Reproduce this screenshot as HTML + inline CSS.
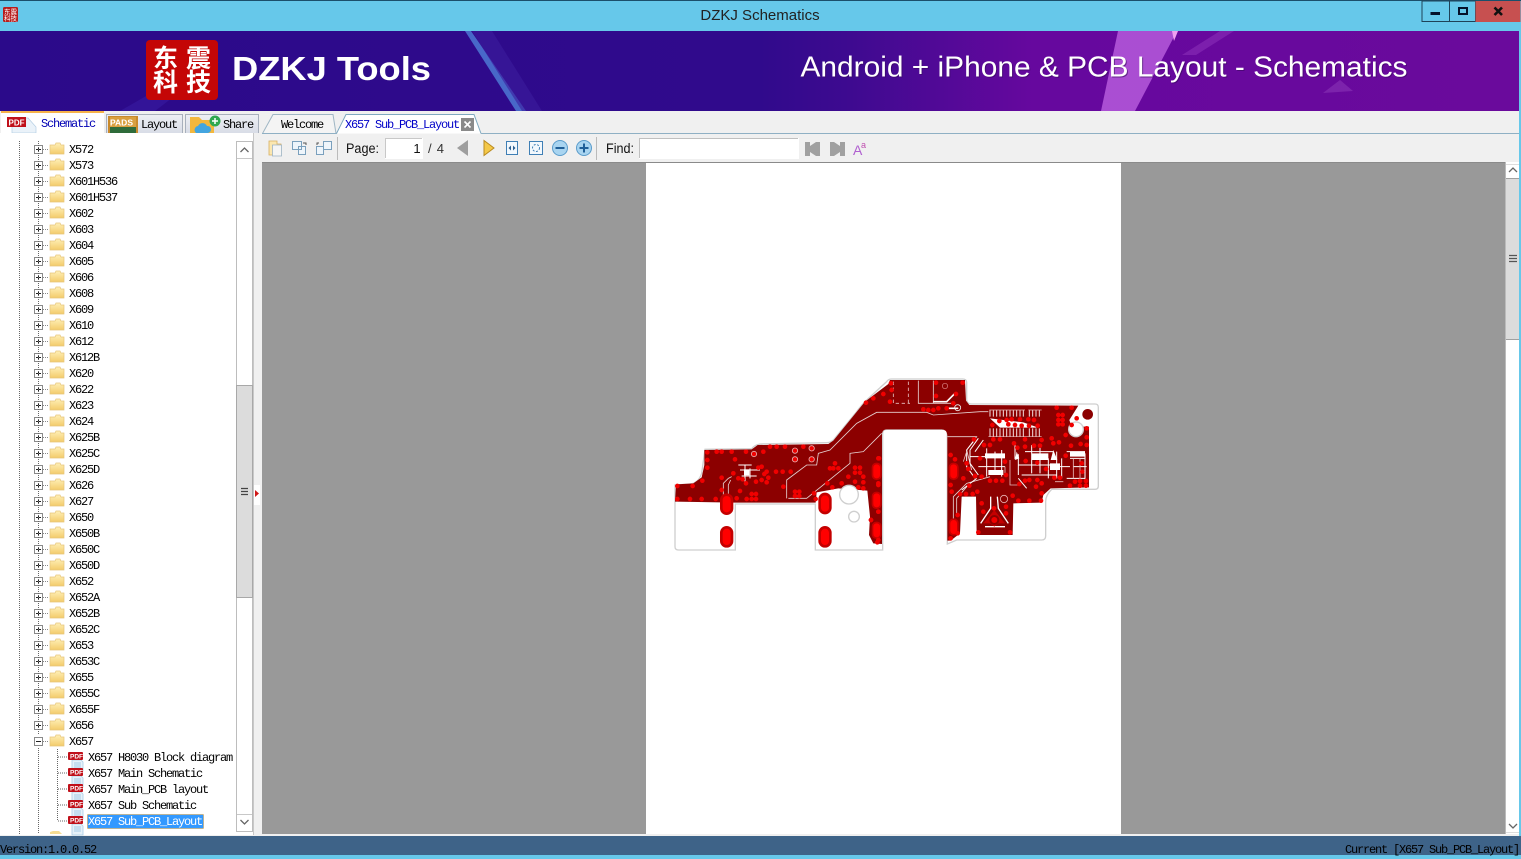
<!DOCTYPE html>
<html><head><meta charset="utf-8"><title>DZKJ Schematics</title>
<style>
html,body{margin:0;padding:0;background:#66c8ea;overflow:hidden}
svg{display:block;position:absolute;left:0;top:0}
.ui{font-family:"Liberation Sans","Noto Sans CJK SC",sans-serif}
.m{font-family:"Liberation Mono","Noto Sans CJK SC",monospace;font-size:12px;letter-spacing:-1.2px;fill:#000}
</style></head><body>
<svg width="1521" height="859" viewBox="0 0 1521 859" xmlns="http://www.w3.org/2000/svg">
<defs>
<linearGradient id="bn" x1="0" x2="1" y1="0" y2="0">
<stop offset="0" stop-color="#2b0a8a"/><stop offset=".5" stop-color="#300a8c"/><stop offset=".56" stop-color="#3e0a90"/><stop offset=".68" stop-color="#66089e"/><stop offset="1" stop-color="#6a0a9c"/>
</linearGradient>
<linearGradient id="fd" x1="0" x2="0" y1="0" y2="1"><stop offset="0" stop-color="#fff0b8"/><stop offset="1" stop-color="#f3cb6a"/></linearGradient>
<linearGradient id="tb" x1="0" x2="0" y1="0" y2="1"><stop offset="0" stop-color="#eef0f5"/><stop offset="1" stop-color="#d8dce6"/></linearGradient>
<pattern id="row" x="0" y="141" width="80" height="16" patternUnits="userSpaceOnUse">
<rect x="34.500" y="4.500" width="8" height="8" fill="#fff" stroke="#8a8a8a"/>
<path d="M36 8.500h5M38.500 6v5" stroke="#222" fill="none"/>
<path d="M43 8.500h6" stroke="#888" stroke-dasharray="1 1" fill="none"/>
<path d="M50 4h5l1-2h4l1 2h3v9H50z" fill="url(#fd)" stroke="#e6c57a" stroke-width=".7"/>
</pattern>
<g id="pdf"><path d="M4 8h9l2 2v9H4z" fill="#e6f1f9" stroke="#a9cde6" stroke-width=".8"/><path d="M6 11h7M6 13h7M6 15h7" stroke="#8fc0e0" stroke-width=".8"/><rect x="0" y="0" width="15" height="8" rx="1" fill="#c0101a"/><text x="2" y="6.500" font-size="6.500" font-weight="700" fill="#fff" class="ui">PDF</text></g>
</defs>

<!-- title bar -->
<rect width="1521" height="859" fill="#66c8ea"/>
<rect width="1521" height="1" fill="#1b4f6b"/>
<rect x="3" y="7" width="15" height="15" rx="1.500" fill="#b71c1c"/>
<text x="10.500" y="14" font-size="6.500" fill="#fff" text-anchor="middle" class="ui">东震</text>
<text x="10.500" y="20.500" font-size="6.500" fill="#fff" text-anchor="middle" class="ui">科技</text>
<text x="760" y="20" font-size="15" fill="#222" text-anchor="middle" class="ui">DZKJ Schematics</text>
<rect x="1422" y="1" width="27.500" height="20.500" fill="#66c8ea" stroke="#1f4258"/>
<rect x="1449.500" y="1" width="26" height="20.500" fill="#66c8ea" stroke="#1f4258"/>
<rect x="1475.500" y="1" width="45" height="21" fill="#c75050"/>
<rect x="1430.500" y="12" width="9.500" height="3" fill="#05122a"/>
<rect x="1459" y="8" width="8" height="6" fill="none" stroke="#05122a" stroke-width="2"/>
<path d="M1494.500 7.500l7.500 7.500M1502 7.500l-7.500 7.500" stroke="#111" stroke-width="2.600" fill="none"/>

<!-- banner -->
<rect x="0" y="31" width="1519" height="80" fill="url(#bn)"/>
<path d="M120 111L205 62h14L155 111zM190 62l16-9h8l-12 9z" fill="#3c22a8" opacity=".45"/>
<path d="M465 31h6l55 80h-10z" fill="#4f7fd8" opacity=".8"/>
<path d="M472 31l20 0 50 80h-20z" fill="#3c1c9e" opacity=".6"/>
<path d="M1118 31h59l-42 80h-34z" fill="#b65bdc" opacity=".85"/>
<path d="M1172 31h6l-4 10z" fill="#f0a0f0"/>
<path d="M1182 55l38-24h14l-38 24z" fill="#8a2eb8" opacity=".6"/>
<path d="M1323 93l17-13 13 11z" fill="#8a35b5" opacity=".6"/>
<rect x="146" y="40" width="72" height="60" rx="4" fill="#c40606"/>
<text x="153" y="67" font-size="25" font-weight="700" fill="#fff" class="ui" textLength="58">东震</text>
<text x="153" y="91" font-size="25" font-weight="700" fill="#fff" class="ui" textLength="58">科技</text>
<text x="232" y="80" font-size="33" font-weight="700" fill="#fff" class="ui" textLength="199" lengthAdjust="spacingAndGlyphs">DZKJ Tools</text>
<text x="801.500" y="77.500" font-size="29" fill="#3a0a60" opacity=".6" class="ui" textLength="607" lengthAdjust="spacingAndGlyphs">Android + iPhone &amp; PCB Layout - Schematics</text>
<text x="800.500" y="76.500" font-size="29" fill="#fff" class="ui" textLength="607" lengthAdjust="spacingAndGlyphs">Android + iPhone &amp; PCB Layout - Schematics</text>
<rect x="1519" y="31" width="2" height="80" fill="#66c8ea"/>

<!-- workspace base -->
<rect x="0" y="111" width="1521" height="725" fill="#f0f0f0"/>
<rect x="1519" y="111" width="2" height="725" fill="#66c8ea"/>

<!-- left tabs -->
<rect x="1" y="111" width="103" height="24" fill="#fff"/>
<rect x="1" y="111" width="103" height="2" fill="#f6b24a"/>
<rect x="106.500" y="114.500" width="76" height="19" fill="url(#tb)" stroke="#a8b0bc"/>
<rect x="185.500" y="114.500" width="73" height="19" fill="url(#tb)" stroke="#a8b0bc"/>
<path d="M12 118h16l8 9v6H12z" fill="#eaf2f9" stroke="#b5cfe4" stroke-width=".7"/>
<rect x="7" y="117" width="19" height="10" fill="#c0101a"/>
<text x="8.500" y="125.500" font-size="8" font-weight="700" fill="#fff" class="ui">PDF</text>
<text x="41" y="127" class="m" style="fill:#0000b4">Schematic</text>
<rect x="108" y="116" width="30" height="17" fill="#c98a2c"/>
<rect x="110" y="117" width="26" height="10" fill="#d9a040"/>
<rect x="110" y="127" width="26" height="6" fill="#2f6b3a"/>
<text x="110" y="125.500" font-size="8.500" font-weight="700" fill="#fff" class="ui">PADS</text>
<text x="141" y="128" class="m">Layout</text>
<path d="M190 117h9l3 3h12v13h-24z" fill="#f3b73d"/>
<path d="M196 133a4 4 0 0 1 2-7 5 5 0 0 1 9 0 3.500 3.500 0 0 1 1 7z" fill="#43a5e0"/>
<circle cx="215" cy="121" r="5.500" fill="#2fa84f"/>
<path d="M212 121h6M215 118v6" stroke="#fff" stroke-width="1.500"/>
<text x="223" y="128" class="m">Share</text>

<!-- right tabs -->
<path d="M262.500 133.500L273 114.500h60l3 19z" fill="#f4f4f4" stroke="#9fb6c4"/>
<path d="M336.500 133.500L346 114.500h128l7 19" fill="#fff" stroke="#7fa9c0"/>
<path d="M262 133.500H337M481 133.500H1519" stroke="#8fb0c4"/>
<text x="281" y="128" class="m">Welcome</text>
<text x="345" y="128" class="m" style="fill:#0000c8">X657 Sub_PCB_Layout</text>
<rect x="461" y="118" width="13" height="13" fill="#8a8a8a"/>
<path d="M464.500 121.500l6 6M470.500 121.500l-6 6" stroke="#fff" stroke-width="1.600"/>

<!-- tree -->
<rect x="0" y="133" width="253" height="702" fill="#fff"/>
<rect x="0" y="141" width="80" height="592" fill="url(#row)"/>
<path d="M19.500 141V834M38.500 141V735M38.500 748V834" stroke="#666" stroke-dasharray="1 1" fill="none"/>
<rect x="34.500" y="737.500" width="8" height="8" fill="#fff" stroke="#8a8a8a"/>
<rect x="36" y="741" width="5" height="1" fill="#222"/>
<path d="M43 741.500h6" stroke="#888" stroke-dasharray="1 1" fill="none"/>
<path d="M50 737h5l1-2h4l1 2h3v9H50z" fill="url(#fd)" stroke="#e6c57a" stroke-width=".7"/>
<path d="M57.500 749V821M58 757h9M58 773h9M58 789h9M58 805h9M58 821h9" stroke="#666" stroke-dasharray="1 1" fill="none"/>
<path d="M50 834v-2l3-1h6l3 3z" fill="#f6dc92"/>
<text x="69" y="153" class="m">X572</text><text x="69" y="169" class="m">X573</text><text x="69" y="185" class="m">X601H536</text><text x="69" y="201" class="m">X601H537</text><text x="69" y="217" class="m">X602</text><text x="69" y="233" class="m">X603</text><text x="69" y="249" class="m">X604</text><text x="69" y="265" class="m">X605</text><text x="69" y="281" class="m">X606</text><text x="69" y="297" class="m">X608</text><text x="69" y="313" class="m">X609</text><text x="69" y="329" class="m">X610</text><text x="69" y="345" class="m">X612</text><text x="69" y="361" class="m">X612B</text><text x="69" y="377" class="m">X620</text><text x="69" y="393" class="m">X622</text><text x="69" y="409" class="m">X623</text><text x="69" y="425" class="m">X624</text><text x="69" y="441" class="m">X625B</text><text x="69" y="457" class="m">X625C</text><text x="69" y="473" class="m">X625D</text><text x="69" y="489" class="m">X626</text><text x="69" y="505" class="m">X627</text><text x="69" y="521" class="m">X650</text><text x="69" y="537" class="m">X650B</text><text x="69" y="553" class="m">X650C</text><text x="69" y="569" class="m">X650D</text><text x="69" y="585" class="m">X652</text><text x="69" y="601" class="m">X652A</text><text x="69" y="617" class="m">X652B</text><text x="69" y="633" class="m">X652C</text><text x="69" y="649" class="m">X653</text><text x="69" y="665" class="m">X653C</text><text x="69" y="681" class="m">X655</text><text x="69" y="697" class="m">X655C</text><text x="69" y="713" class="m">X655F</text><text x="69" y="729" class="m">X656</text><text x="69" y="745" class="m">X657</text>
<use href="#pdf" x="68" y="752"/><use href="#pdf" x="68" y="768"/><use href="#pdf" x="68" y="784"/><use href="#pdf" x="68" y="800"/><use href="#pdf" x="68" y="816"/>
<rect x="87.500" y="814.500" width="116" height="14" fill="#3399ff" stroke="#d99a30" stroke-dasharray="1 1"/>
<text x="88" y="761" class="m">X657 H8030 Block diagram</text>
<text x="88" y="777" class="m">X657 Main Schematic</text>
<text x="88" y="793" class="m">X657 Main_PCB layout</text>
<text x="88" y="809" class="m">X657 Sub Schematic</text>
<text x="88" y="825" class="m" style="fill:#fff">X657 Sub_PCB_Layout</text>

<!-- tree scrollbar -->
<rect x="236.500" y="141.500" width="16" height="690" fill="#fff" stroke="#bdbdbd"/>
<rect x="236.500" y="385.500" width="16" height="212" fill="#dcdcdc" stroke="#a8a8a8"/>
<path d="M240.500 152l4-4 4 4M240.500 820l4 4 4-4" stroke="#666" stroke-width="1.300" fill="none"/>
<path d="M237 814.500h15M237 158.500h15" stroke="#c8c8c8"/>
<path d="M241 488.500h7M241 491.500h7M241 494.500h7" stroke="#444" stroke-width="1.200"/>
<rect x="253" y="133" width="9" height="702" fill="#f0f0f0"/>
<rect x="253" y="133" width="1" height="702" fill="#c8c8c8"/>
<rect x="254" y="485" width="6" height="20" fill="#fff"/>
<path d="M255 490l4 3.500-4 3.500z" fill="#d01818"/>

<!-- toolbar -->
<rect x="262" y="135" width="1257" height="27" fill="#f0f0f0"/>
<path d="M269 141h8v3h4v11h-12z" fill="#fbe7b0" stroke="#d8b060" stroke-width=".8"/><path d="M272.500 145h9v11h-9z" fill="#f5f5f5" stroke="#9db3c4" stroke-width=".8"/>
<path d="M292.500 141.500h9v8h-9zM298.500 146.500h7v8h-7z" fill="#eef5fb" stroke="#7aa0bd"/><path d="M303 143h3v2" stroke="#555" fill="none"/>
<path d="M323.500 141.500h8v8h-8zM316.500 146.500h7v8h-7z" fill="#eef5fb" stroke="#7aa0bd"/><path d="M319 143h-2v2" stroke="#555" fill="none"/>
<path d="M337.500 137v23M596.500 137v23" stroke="#bbb"/>
<text x="346" y="153" font-size="13.500" fill="#111" class="ui" textLength="33" lengthAdjust="spacingAndGlyphs">Page:</text>
<rect x="385" y="138" width="38" height="21" fill="#fff"/><path d="M385.500 158V138.500H422" stroke="#c8c8c8" fill="none"/>
<text x="417" y="153" font-size="13" fill="#111" text-anchor="middle" class="ui">1</text>
<text x="428" y="153" font-size="13" fill="#333" class="ui" textLength="16">/ 4</text>
<path d="M468 140v16l-11-8z" fill="#9e9e9e"/>
<path d="M484 140.500v15l10-7.500z" fill="#f4c848" stroke="#b98a20"/>
<rect x="506.500" y="141.500" width="11" height="13" fill="#f2f8fd" stroke="#3f7fb5"/><path d="M508.500 148l2.500-2.500v5zM515.500 148l-2.500-2.500v5z" fill="#2c5f90"/>
<rect x="529.500" y="141.500" width="13" height="13" fill="#f2f8fd" stroke="#3f7fb5"/><circle cx="536" cy="148" r="3.500" fill="none" stroke="#3f7fb5" stroke-dasharray="2 1.500"/>
<circle cx="560" cy="148" r="7.500" fill="#a8d4f0" stroke="#5a9ccb"/><rect x="555.500" y="147" width="9" height="2" fill="#1f5f98"/>
<circle cx="584" cy="148" r="7.500" fill="#a8d4f0" stroke="#5a9ccb"/><path d="M579.500 148h9M584 143.500v9" stroke="#1f5f98" stroke-width="2"/>
<text x="606" y="153" font-size="13.500" fill="#111" class="ui" textLength="28" lengthAdjust="spacingAndGlyphs">Find:</text>
<rect x="639" y="138" width="160" height="21" fill="#fff"/><path d="M639.500 158V138.500H798" stroke="#c0c0c0" fill="none"/>
<path d="M805 142h5v4l6-4h4v14h-4l-6-4v4h-5z" fill="#a0a0a0"/>
<path d="M845 142h-5v4l-6-4h-4v14h4l6-4v4h5z" fill="#a0a0a0"/>
<text x="853" y="155" font-size="14" fill="#b060d0" class="ui">A</text><text x="861" y="148" font-size="9" fill="#c050b0" class="ui">a</text>

<!-- viewer -->
<rect x="262" y="162" width="1244" height="672" fill="#999"/>
<rect x="262" y="162" width="1244" height="1" fill="#8a8a8a"/>
<rect x="646" y="163" width="475" height="671" fill="#fff"/>
<rect x="1506" y="162" width="13" height="672" fill="#fff"/>
<rect x="1506" y="178" width="13" height="162" fill="#dcdcdc"/>
<path d="M1506 178.500h13M1506 339.500h13" stroke="#a0a0a0"/><rect x="1505" y="162" width="1" height="672" fill="#bbb"/>
<path d="M1509 172l4-4 4 4M1509 824l4 4 4-4" stroke="#666" stroke-width="1.300" fill="none"/>
<path d="M1509 255.500h8M1509 258.500h8M1509 261.500h8" stroke="#555" stroke-width="1.200"/>
<path d="M1506 164.500h13M1506 832.500h13" stroke="#ddd"/>

<!-- PCB -->
<g transform="translate(660 370) scale(.33333)">
<path d="M45 345V530Q45 540 55 540H226V402H466V540H668V190Q668 178 680 178H850Q862 178 862 190V522L890 510H1145Q1157 510 1157 498V395Q1157 375 1175 358H1305Q1315 358 1315 348V112Q1315 102 1305 102H935Q920 102 920 88V38Q920 27 908 27H695Q685 27 680 35L620 90Q600 110 590 125L520 210Q512 218 500 218L300 222Q285 224 275 236L135 238L125 310Q115 340 90 342Z" fill="#fff" stroke="#cfcfcf" stroke-width="4"/>
<path d="M48 343L100 340 125 322 133 285V240L275 238 293 225 505 222 520 212 615 95 685 42 690 30H915L918 92 928 105 1255 107 1228 150 1245 200 1270 170H1287V352L1172 355 1150 375 1145 398 1060 400 1058 495H950L948 380H905L900 490 872 512H862V195Q860 178 845 178H680Q668 178 666 190V522L640 520 627 495 630 440 622 362 535 355 470 367 467 398 225 398 45 395Z" fill="#8c0000"/>
<!-- holes -->
<circle cx="567" cy="374" r="28" fill="#fff" stroke="#cfcfcf" stroke-width="4"/>
<circle cx="582" cy="440" r="16" fill="#fff" stroke="#cfcfcf" stroke-width="4"/>
<circle cx="1248" cy="178" r="22" fill="#fff" stroke="#cfcfcf" stroke-width="4"/>
<circle cx="1283" cy="133" r="16" fill="#8c0000"/>
<!-- traces -->
<path d="M380 385V330L440 285H470L475 250 510 240 590 160 650 127H800L820 135 960 125H985M385 385H440L570 280V250L610 245 665 190M190 375V340L205 325 215 320M205 375V345L212 330M862 200H950L920 240 935 300M880 450V380L920 340 990 320M890 440V385L925 345M775 32V100H820V32M775 100H880" stroke="#e6d2d2" stroke-width="2.500" fill="none"/>
<path d="M700 35V100H750M745 35V100" stroke="#e6c0c0" stroke-width="2.500" stroke-dasharray="10 8" fill="none"/>
<path d="M820 95H860L885 70M860 115H895" stroke="#fff" stroke-width="5" fill="none"/>
<circle cx="893" cy="113" r="9" fill="none" stroke="#eee" stroke-width="2.500"/>
<circle cx="855" cy="48" r="8" fill="none" stroke="#d88" stroke-width="2"/>
<path d="M235 285H275M240 300H300M245 318H290M255 285V335M270 295V325" stroke="#fff" stroke-width="3" fill="none"/>
<rect x="252" y="298" width="16" height="18" fill="#fff"/>
<!-- pads -->
<g fill="#c40000">
<rect x="180" y="370" width="40" height="65" rx="20"/><rect x="180" y="468" width="40" height="65" rx="20"/>
<rect x="475" y="368" width="40" height="65" rx="20"/><rect x="475" y="468" width="40" height="65" rx="20"/>
<rect x="635" y="278" width="30" height="52" rx="14"/><rect x="635" y="365" width="30" height="52" rx="14"/><rect x="635" y="455" width="30" height="52" rx="14"/>
<rect x="866" y="278" width="30" height="52" rx="14"/><rect x="866" y="445" width="30" height="52" rx="14"/>
</g>
<g fill="#ff0000">
<rect x="188" y="378" width="24" height="49" rx="12"/><rect x="188" y="476" width="24" height="49" rx="12"/>
<rect x="483" y="376" width="24" height="49" rx="12"/><rect x="483" y="476" width="24" height="49" rx="12"/>
<rect x="640" y="283" width="20" height="42" rx="10"/><rect x="640" y="370" width="20" height="42" rx="10"/><rect x="640" y="460" width="20" height="42" rx="10"/>
<rect x="871" y="283" width="20" height="42" rx="10"/><rect x="871" y="450" width="20" height="42" rx="10"/>
</g>
<!-- vias top section -->
<path d="M693 40h0M695 60h0M690 95h0M670 72h0M640 85h0M618 98h0M908 38h0M828 38h0M888 72h0M828 78h0M880 100h0M860 115h0M835 115h0M820 120h0M805 120h0M790 118h0M655 265h0M655 345h0M655 425h0M655 510h0M633 450h0M872 255h0M885 268h0M872 345h0M875 365h0M872 505h0M893 435h0M893 490h0" stroke="#f00000" stroke-width="14" stroke-linecap="round" fill="none"/>
</g>
<!-- left copper vias -->
<g transform="translate(670 430) scale(.33333)">
<path d="M22 207h0M60 207h0M95 207h0M137 207h0M200 205h0M230 207h0M245 207h0M258 207h0M245 192h0M258 192h0M210 183h0M155 143h0M155 180h0M190 130h0M195 88h0M112 67h0M140 65h0M155 65h0M185 65h0M228 65h0M112 90h0M112 113h0M97 152h0M68 168h0M22 168h0M280 65h0M300 50h0M320 50h0M345 50h0M400 50h0M318 125h0M338 125h0M362 125h0M340 170h0M275 110h0M290 125h0M283 132h0M295 143h0M290 157h0M275 150h0M258 155h0M228 160h0M205 145h0M218 148h0M265 113h0M480 115h0M495 100h0M505 115h0M490 115h0M555 113h0M570 113h0M555 128h0M570 128h0M580 140h0M535 140h0M555 155h0M580 157h0M515 160h0M472 160h0M487 172h0M565 172h0M580 175h0M375 185h0M388 185h0M375 198h0M388 198h0M432 190h0M437 207h0M627 85h0M625 160h0M625 245h0M603 270h0M622 337h0" stroke="#f00000" stroke-width="14" stroke-linecap="round" fill="none"/>
<g fill="#f00000" stroke="#e8b0b0" stroke-width="2.500"><circle cx="252" cy="72" r="8"/><circle cx="425" cy="55" r="8"/><circle cx="375" cy="62" r="8"/><circle cx="375" cy="88" r="8"/><circle cx="425" cy="88" r="8"/></g>
</g>
<!-- right copper -->
<g transform="translate(960 395) scale(.33333)">
<path d="M90 45v20M100 45v20M110 45v20M120 45v20M130 45v20M140 45v20M150 45v20M160 45v20M170 45v20M180 45v20M190 45v20M208 45v20M218 45v20M228 45v20M238 45v20M90 100v25M100 100v25M110 100v25M120 100v25M130 100v25M140 100v25M150 100v25M160 100v25M170 100v25M180 100v25M190 100v25M208 100v25M218 100v25M228 100v25M238 100v25" stroke="#f2dede" stroke-width="3" fill="none"/>
<path d="M88 45H195M205 45H245M85 125H245" stroke="#e6b8b8" stroke-width="2" fill="none"/>
<path d="M90 70L120 98H235L190 82 130 75z" fill="#fff"/>
<path d="M40 140L20 165V215L45 250M55 130L30 165V205L55 240M70 135L45 170M30 185H125M55 215H135M80 160V245M105 170V240M125 165V245M165 140V190L175 180V240M195 170H280M215 150V235M240 150V235M175 210H270M185 240H290M265 190V250M290 170V250M305 190V250M270 215H330M320 170H375M375 175V255M330 190H375M340 215H380M320 250H375M175 250L200 280M5 285L50 250" stroke="#fff" stroke-width="3" fill="none"/>
<path d="M150 195V270H180M285 260H310M340 190V250M360 190V250M20 170L10 200M135 215V245" stroke="#e6b8b8" stroke-width="2.500" fill="none"/>
<path d="M75 175H135V190H75zM85 225H130V240H85zM170 170L178 190 165 195zM280 165L292 195H272zM215 175H265V195H215zM330 170H375V185H330zM270 205H300V225H270z" fill="#fff"/>
<!-- lower connector -->
<path d="M92 305V340L62 385M112 305L115 340 145 385M75 395H135" fill="none" stroke="#fff" stroke-width="4"/>
<path d="M103 345L135 385 115 385 103 395 90 385 70 385z" fill="#c40000"/>
<circle cx="103" cy="375" r="15" fill="#8c0000"/><circle cx="103" cy="375" r="9" fill="#f00000"/>
<circle cx="132" cy="312" r="11" fill="none" stroke="#e8b0b0" stroke-width="2.500"/>
<path d="M97 90h0M118 78h0M140 75h0M155 73h0M180 73h0M205 73h0M222 75h0M145 88h0M165 90h0M185 92h0M207 92h0M233 92h0M42 133h0M100 133h0M120 133h0M162 145h0M172 158h0M195 133h0M195 155h0M222 152h0M240 152h0M245 135h0M275 130h0M280 145h0M297 142h0M333 152h0M317 182h0M362 147h0M380 150h0M380 100h0M380 127h0M365 205h0M367 230h0M345 260h0M360 258h0M378 258h0M360 272h0M378 272h0M330 272h0M283 248h0M300 248h0M258 222h0M232 203h0M197 198h0M135 200h0M72 150h0M90 150h0M60 190h0M20 205h0M25 222h0M45 243h0M65 245h0M90 257h0M108 257h0M127 257h0M138 240h0M178 267h0M195 257h0M208 255h0M232 255h0M245 265h0M228 275h0M10 250h0M28 272h0M0 297h0M18 297h0M38 297h0M52 290h0M65 325h0M70 350h0M158 302h0M138 335h0M138 355h0M55 412h0M150 412h0M175 317h0M208 317h0M243 317h0M245 295h0M102 340h0M290 38h0M335 38h0M350 70h0M335 90h0M295 60h0M308 60h0M295 75h0M308 75h0M295 88h0M308 88h0M317 120h0" stroke="#f00000" stroke-width="14" stroke-linecap="round" fill="none"/>
</g>

<!-- status bar -->
<rect x="0" y="836" width="1521" height="19" fill="#3e6388"/>
<rect x="0" y="855" width="1521" height="4" fill="#66c8ea"/>
<text x="0" y="853" class="m">Version:1.0.0.52</text>
<text x="1345" y="853" class="m">Current [X657 Sub_PCB_Layout]</text>
</svg>
</body></html>
